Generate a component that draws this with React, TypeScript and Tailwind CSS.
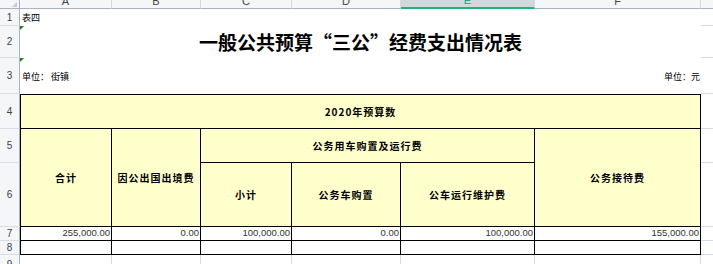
import React from 'react';

const cols = ['A', 'B', 'C', 'D', 'E', 'F'];
const rows = [1, 2, 3, 4, 5, 6, 7, 8, 9];

const cjk = "font-['Noto_Sans_CJK_SC',sans-serif]";
const num = "font-['Liberation_Sans',Arial,sans-serif]";

// yellow header cell, black grid border
const head =
  `bg-[#ffffcc] border-r border-b border-black flex items-center justify-center text-[10px] font-bold tracking-[1px] text-black ${cjk}`;
const cell = `bg-white border-r border-b border-black flex items-center justify-end pr-[1px] text-[9.5px] text-[#333] ${num}`;

const App: React.FC = () => {
  return (
    <div className="w-[713px] h-[264px] overflow-hidden bg-white">
      <div className="grid grid-cols-[20px_92px_89px_91px_109px_134px_166px_12px] grid-rows-[9px_17px_32px_36px_35px_34px_64px_14px_14px_20px]">
        {/* corner */}
        <div className="col-start-1 row-start-1 bg-[#f5f6f8] border-r border-b border-[#aab1c2] relative">
          <div className="absolute right-[2px] bottom-[1px] w-0 h-0 border-b-[5px] border-l-[5px] border-b-[#c5c9d0] border-l-transparent" />
        </div>
        {/* column letters */}
        {cols.map((c, i) => (
          <div
            key={c}
            className={`row-start-1 overflow-hidden flex items-end justify-center border-r border-[#d6d9df] ${num} text-[11px] leading-[11px] ${
              c === 'E'
                ? 'bg-[#d3d6dc] text-[#20a86f] border-b-2 border-b-[#1fb57a]'
                : 'bg-[#f5f6f8] text-[#444] border-b border-b-[#aab1c2]'
            }`}
            style={{ gridColumnStart: i + 2 }}
          >
            <span className="mb-[1px]">{c}</span>
          </div>
        ))}
        <div className="col-start-8 row-start-1 bg-[#f5f6f8] border-b border-[#aab1c2]" />

        {/* row numbers */}
        {rows.map((r) => (
          <div
            key={r}
            className={`col-start-1 bg-[#f5f6f8] border-r border-r-[#aab1c2] border-b border-b-[#d9dce2] flex items-center justify-center text-[10px] text-[#3a3f4a] ${num}`}
            style={{ gridRowStart: r + 1 }}
          >
            {r}
          </div>
        ))}

        {/* rows 1-3 */}
        <div className={`col-start-2 col-span-6 row-start-2 flex items-center pl-[2px] text-[9px] text-black ${cjk}`}>表四</div>
        <div className="col-start-2 col-span-6 row-start-3 relative flex items-center justify-center">
          <div className="absolute left-0 top-0 w-0 h-0 border-t-[4px] border-r-[4px] border-t-[#1b7d1b] border-r-transparent" />
          <span className={`text-[19px] font-bold text-black ${cjk}`}>一般公共预算“三公”经费支出情况表</span>
        </div>
        <div className={`col-start-2 col-span-6 row-start-4 relative flex items-center justify-between pl-[2px] pr-[1px] pt-[2px] text-[9px] text-black ${cjk}`}>
          <div className="absolute left-0 top-0 w-0 h-0 border-t-[4px] border-r-[4px] border-t-[#1b7d1b] border-r-transparent" />
          <span>单位： 街镇</span>
          <span>单位：元</span>
        </div>

        {/* table header */}
        <div className={`col-start-2 col-span-6 row-start-5 border-t border-l ${head}`}>2020年预算数</div>
        <div className={`col-start-2 row-start-6 row-span-2 border-l ${head}`}>合计</div>
        <div className={`col-start-3 row-start-6 row-span-2 ${head}`}>因公出国出境费</div>
        <div className={`col-start-4 col-span-3 row-start-6 ${head}`}>公务用车购置及运行费</div>
        <div className={`col-start-7 row-start-6 row-span-2 ${head}`}>公务接待费</div>
        <div className={`col-start-4 row-start-7 ${head}`}>小计</div>
        <div className={`col-start-5 row-start-7 ${head}`}>公务车购置</div>
        <div className={`col-start-6 row-start-7 ${head}`}>公车运行维护费</div>

        {/* data row 7 */}
        <div className={`col-start-2 row-start-8 border-l ${cell}`}>255,000.00</div>
        <div className={`col-start-3 row-start-8 ${cell}`}>0.00</div>
        <div className={`col-start-4 row-start-8 ${cell}`}>100,000.00</div>
        <div className={`col-start-5 row-start-8 ${cell}`}>0.00</div>
        <div className={`col-start-6 row-start-8 ${cell}`}>100,000.00</div>
        <div className={`col-start-7 row-start-8 ${cell}`}>155,000.00</div>

        {/* empty row 8 */}
        {cols.map((c, i) => (
          <div
            key={`r8${c}`}
            className={`row-start-9 ${cell} ${i === 0 ? 'border-l' : ''}`}
            style={{ gridColumnStart: i + 2 }}
          />
        ))}

        {/* row 9, gridlines only */}
        {cols.map((c, i) => (
          <div
            key={`r9${c}`}
            className="row-start-10 border-r border-[#d3d9e6]"
            style={{ gridColumnStart: i + 2 }}
          />
        ))}

        {/* column beyond F */}
        {[2, 3, 4, 5, 6, 7, 8, 9, 10].map((r) => (
          <div
            key={`g${r}`}
            className="col-start-8 border-b border-[#d3d9e6]"
            style={{ gridRowStart: r }}
          />
        ))}
      </div>
    </div>
  );
};

export default App;
